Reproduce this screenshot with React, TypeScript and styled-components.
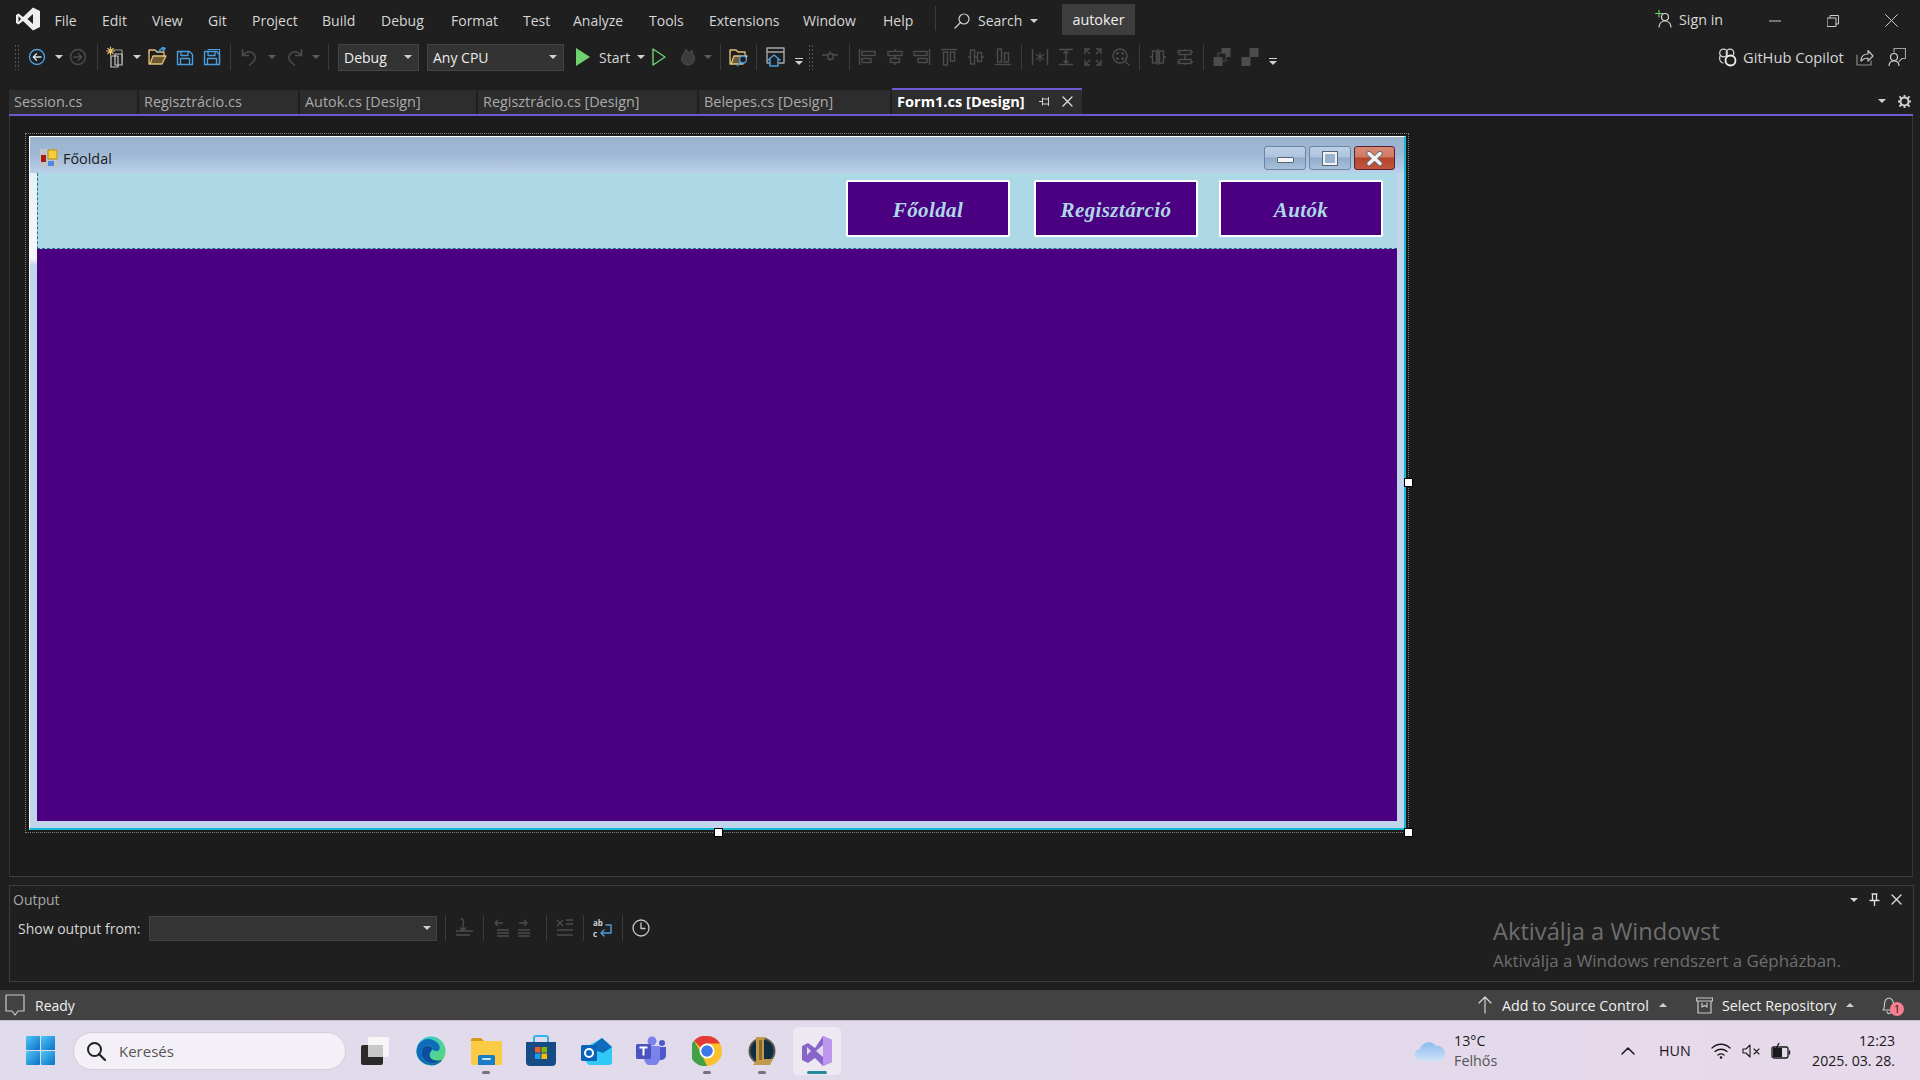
import React from "react";
import styled, {createGlobalStyle} from "styled-components";

const GlobalStyle = createGlobalStyle`
    html, body {
        margin: 0;
        padding: 0;
        background: #1f1f1f;
    }
    body {
        font-family: "Open Sans", "Noto Sans", "Liberation Sans", sans-serif;
        font-size: 14px;
        color: #d8d8d8;
    }
    svg {
        display: block;
        flex-shrink: 0;
    }
`;

const Page = styled.div`
    width: 1920px;
    height: 1080px;
    overflow: hidden;
    display: flex;
    flex-direction: column;
    background: #1f1f1f;
`;

const MenuBar = styled.div`
    height: 38px;
    display: flex;
    align-items: center;
    padding-left: 15px;
    padding-top: 3px;
    box-sizing: border-box;
    flex-shrink: 0;
`;

const LogoSlot = styled.div`
    width: 39.5px;
    flex-shrink: 0;
    margin-top: -3px;
`;

const MenuItem = styled.div<{ $w: number }>`
    width: ${(p) => p.$w}px;
    flex-shrink: 0;
    color: #d6d6d6;
    white-space: nowrap;
`;

const MenuSeparator = styled.div`
    width: 1px;
    height: 25px;
    background: #3c3c3c;
    margin: -4px 18px 0 20px;
    flex-shrink: 0;
`;

const SearchBox = styled.div`
    width: 108px;
    display: flex;
    align-items: center;
    gap: 8px;
    flex-shrink: 0;
`;

const ProjectName = styled.div`
    width: 73px;
    height: 31px;
    margin-top: -2px;
    display: flex;
    align-items: center;
    justify-content: center;
    background: #3d3d3d;
    color: #f0f0f0;
    font-size: 14.4px;
    flex-shrink: 0;
`;

const SignIn = styled.div`
    margin-left: 520px;
    display: flex;
    align-items: center;
    gap: 6px;
    width: 91px;
    flex-shrink: 0;
    font-size: 14.3px;
    white-space: nowrap;
    margin-top: -3px;
`;

const WindowButton = styled.div<{ $w: number }>`
    width: ${(p) => p.$w}px;
    display: flex;
    justify-content: center;
    flex-shrink: 0;
    margin-top: 0;
`;

const ToolBar = styled.div`
    height: 38px;
    box-sizing: border-box;
    display: flex;
    align-items: center;
    padding: 0 0 0 10px;
    flex-shrink: 0;
`;

const Slot = styled.div<{ $w: number }>`
    width: ${(p) => p.$w}px;
    height: 100%;
    display: flex;
    align-items: center;
    justify-content: center;
    flex-shrink: 0;
`;

const ToolSeparator = styled.div`
    width: 1px;
    height: 26px;
    background: #3a3a3a;
`;

const Caret = styled.span<{ $dim?: boolean; $up?: boolean }>`
    display: block;
    width: 0;
    height: 0;
    border-left: 4px solid transparent;
    border-right: 4px solid transparent;
    ${(p) => (p.$up ? "border-bottom" : "border-top")}: 4px solid ${(p) => (p.$dim ? "#5c5c5c" : "#d0d0d0")};
`;

const Grip = styled.div`
    width: 6px;
    height: 26px;
    flex-shrink: 0;
    background-image: radial-gradient(#555 0.8px, transparent 1px);
    background-size: 3px 4px;
`;

const Overflow = styled.div`
    width: 8px;
    margin-top: 9px;
    display: flex;
    flex-direction: column;
    align-items: center;
    gap: 2px;
    &::before {
        content: "";
        width: 8px;
        height: 1px;
        background: #d0d0d0;
    }
    &::after {
        content: "";
        border-left: 4px solid transparent;
        border-right: 4px solid transparent;
        border-top: 4px solid #d0d0d0;
    }
`;

const Combo = styled.div<{ $w: number }>`
    width: ${(p) => p.$w}px;
    height: 27px;
    box-sizing: border-box;
    display: flex;
    align-items: center;
    justify-content: space-between;
    padding: 0 6px 0 5px;
    background: #333333;
    border: 1px solid #434343;
    color: #ececec;
    flex-shrink: 0;
`;

const ToolText = styled.div<{ $w: number }>`
    width: ${(p) => p.$w}px;
    flex-shrink: 0;
    color: #d6d6d6;
    white-space: nowrap;
`;

const ToolRight = styled.div`
    margin-left: auto;
    display: flex;
    align-items: center;
    height: 100%;
    padding-right: 14px;
`;

const CopilotLabel = styled.div`
    margin: 0 13px 0 6px;
    width: 100px;
    color: #d6d6d6;
    white-space: nowrap;
    font-size: 14.7px;
`;

const TabStrip = styled.div`
    margin: 12px 7px 0 9px;
    height: 28px;
    box-sizing: border-box;
    display: flex;
    gap: 2px;
    align-items: stretch;
    border-bottom: 2px solid #6b5bd2;
    flex-shrink: 0;
`;

const Tab = styled.div<{ $w: number; $active?: boolean }>`
    width: ${(p) => p.$w}px;
    box-sizing: border-box;
    display: flex;
    align-items: center;
    padding: 0 0 2px 5px;
    background: #2d2d2d;
    border-top: 2px solid ${(p) => (p.$active ? "#6b5bd2" : "#1f1f1f")};
    color: ${(p) => (p.$active ? "#ffffff" : "#ababab")};
    font-weight: ${(p) => (p.$active ? 700 : 400)};
    white-space: nowrap;
    font-size: ${(p) => (p.$active ? 14.6 : 14.4)}px;
`;

const TabActions = styled.div`
    margin-left: auto;
    display: flex;
    align-items: center;
    gap: 12px;
    padding-right: 2px;
`;

const TabPinClose = styled.div`
    margin-left: auto;
    display: flex;
    align-items: center;
    gap: 12px;
    padding-right: 9px;
`;

const DesignerPane = styled.div`
    margin: 0 7px 0 9px;
    height: 761px;
    box-sizing: border-box;
    border-left: 1px solid #363636;
    border-right: 1px solid #363636;
    border-bottom: 1px solid #3f3f3f;
    background: #1b1b1b;
    padding: 17px 0 0 15px;
    flex-shrink: 0;
`;

const Selection = styled.div`
    position: relative;
    width: 1384px;
    height: 700px;
    box-sizing: border-box;
    border: 1px dotted #808080;
    padding: 2px 2px 2px 3px;
`;

const Handle = styled.div<{ $x: number; $y: number }>`
    position: absolute;
    left: ${(p) => p.$x}px;
    top: ${(p) => p.$y}px;
    width: 7px;
    height: 7px;
    background: #ffffff;
    box-shadow: 0 0 0 1px #000000;
`;

const FormWindow = styled.div`
    width: 1377px;
    height: 694px;
    box-sizing: border-box;
    display: flex;
    flex-direction: column;
    background: #c0d4ec;
    border-top: 1px solid #ffffff;
    border-left: 1px solid #ffffff;
    border-right: 2px solid #12b8d8;
    border-bottom: 2px solid #12b8d8;
`;

const TitleBar = styled.div`
    height: 36px;
    display: flex;
    align-items: flex-start;
    padding: 9px 9px 0 10px;
    box-sizing: border-box;
    background: linear-gradient(#9bb4d0 0%, #9eb7d3 45%, #b9d0e9 100%);
    flex-shrink: 0;
`;

const FormIcon = styled.svg`
    margin-top: 3px;
`;

const FormTitle = styled.div`
    margin: 3px 0 0 5px;
    font-size: 14.4px;
    color: #1a1a1a;
    line-height: 19px;
`;

const CaptionGroup = styled.div`
    margin-left: auto;
    display: flex;
    gap: 3px;
`;

const CaptionButton = styled.div<{ $close?: boolean }>`
    width: ${(p) => (p.$close ? 41 : 42)}px;
    height: 24px;
    box-sizing: border-box;
    border: 1px solid ${(p) => (p.$close ? "#5a2030" : "#6f84a0")};
    border-radius: 3px;
    display: flex;
    align-items: center;
    justify-content: center;
    background: ${(p) =>
        p.$close
            ? "linear-gradient(#d98a74 0%, #d07a64 45%, #b4452c 50%, #c0563c 100%)"
            : "linear-gradient(#bccfe6 0%, #aec4de 45%, #90acc9 50%, #a8c0da 100%)"};
`;

const MinGlyph = styled.div`
    width: 17px;
    height: 6px;
    box-sizing: border-box;
    background: #f4f4f4;
    border: 1px solid #55657c;
    border-radius: 1px;
    margin-top: 3px;
`;

const MaxGlyph = styled.div`
    width: 14px;
    height: 13px;
    box-sizing: border-box;
    background: #98b2d0;
    border: 2px solid #f2f2f2;
    outline: 1px solid #55657c;
`;

const FormBody = styled.div`
    flex: 1;
    display: flex;
    min-height: 0;
`;

const LeftEdge = styled.div`
    width: 7px;
    flex-shrink: 0;
    background: linear-gradient(#e8f1f9 0, #f4f8fc 85px, #c0d4ec 92px);
`;

const Client = styled.div`
    width: 1360px;
    margin-bottom: 7px;
    display: flex;
    flex-direction: column;
    background: #4b0082;
    flex-shrink: 0;
`;

const HeaderPanel = styled.div`
    height: 76px;
    box-sizing: border-box;
    display: flex;
    justify-content: flex-end;
    padding: 7px 14px 0 0;
    background: #add8e6;
    border-left: 1px dashed #2b6f86;
    border-bottom: 1px dashed #2b6f86;
`;

const NavButton = styled.div<{ $gap: number }>`
    width: 164px;
    height: 57px;
    box-sizing: border-box;
    margin-right: ${(p) => p.$gap}px;
    padding-top: 3px;
    display: flex;
    align-items: center;
    justify-content: center;
    background: #4b0082;
    border: 2px solid #ffffff;
    border-radius: 2px;
    color: #add8e6;
    font-family: "Liberation Serif", serif;
    font-style: italic;
    font-weight: 700;
    font-size: 21px;
    letter-spacing: 0.4px;
`;

const OutputPanel = styled.div`
    position: relative;
    margin: 8px 6px 0 9px;
    height: 97px;
    box-sizing: border-box;
    border: 1px solid #3c3c3c;
    flex-shrink: 0;
    padding: 0 0 0 3px;
`;

const OutputHead = styled.div`
    height: 27px;
    display: flex;
    align-items: center;
    color: #a8a8a8;
    font-size: 14px;
`;

const OutputActions = styled.div`
    margin-left: auto;
    display: flex;
    align-items: center;
    gap: 11px;
    padding-right: 11px;
`;

const OutputRow = styled.div`
    display: flex;
    align-items: center;
    height: 26px;
    margin-top: 2px;
    padding-left: 5px;
`;

const OutputLabel = styled.div`
    width: 131px;
    flex-shrink: 0;
    color: #d6d6d6;
    white-space: nowrap;
`;

const OutputCombo = styled.div`
    width: 288px;
    height: 25px;
    box-sizing: border-box;
    display: flex;
    align-items: center;
    justify-content: flex-end;
    padding-right: 5px;
    background: #343434;
    border: 1px solid #434343;
    flex-shrink: 0;
`;

const Watermark = styled.div`
    position: absolute;
    left: 1483px;
    top: 28px;
    color: #6e6e6e;
`;

const WatermarkTitle = styled.div`
    font-size: 23.7px;
    line-height: 34px;
`;

const WatermarkText = styled.div`
    font-size: 16.9px;
    line-height: 22px;
    margin-top: 2px;
`;

const StatusBar = styled.div`
    margin-top: 8px;
    height: 30px;
    display: flex;
    align-items: center;
    background: #424242;
    color: #f0f0f0;
    flex-shrink: 0;
`;

const StatusReady = styled.div`
    margin-left: 10px;
`;

const StatusRight = styled.div`
    margin-left: auto;
    display: flex;
    align-items: center;
    height: 100%;
    font-size: 14.3px;
`;

const StatusText = styled.div<{ $w: number }>`
    width: ${(p) => p.$w}px;
    white-space: nowrap;
    flex-shrink: 0;
`;

const Taskbar = styled.div`
    height: 60px;
    display: flex;
    align-items: center;
    box-sizing: border-box;
    border-top: 1px solid #c4bccb;
    padding: 0 25px 0 26px;
    background: linear-gradient(90deg, #e0dbea 0%, #e1daeb 50%, #e7d9ea 100%);
    flex-shrink: 0;
    color: #1a1a1a;
`;

const SearchPill = styled.div`
    width: 273px;
    height: 38px;
    box-sizing: border-box;
    margin: 0 1.5px 0 18px;
    display: flex;
    align-items: center;
    gap: 13px;
    padding-left: 12px;
    background: #f3f1f7;
    border: 1px solid #d4cedb;
    border-radius: 19px;
    color: #555555;
    font-size: 15px;
    flex-shrink: 0;
`;

const TaskSlot = styled.div<{ $nudge?: number }>`
    position: relative;
    width: 55.25px;
    height: 48px;
    display: flex;
    align-items: center;
    justify-content: center;
    flex-shrink: 0;
    & > svg {
        margin-left: ${(p) => p.$nudge ?? 0}px;
    }
`;

const ActiveTile = styled.div`
    width: 48px;
    height: 48px;
    display: flex;
    align-items: center;
    justify-content: center;
    border-radius: 5px;
    background: rgba(255, 255, 255, 0.42);
`;

const TaskDot = styled.div<{ $active?: boolean }>`
    position: absolute;
    left: 50%;
    bottom: 1px;
    width: ${(p) => (p.$active ? 20 : 8)}px;
    height: 3px;
    margin-left: ${(p) => (p.$active ? -10 : -4)}px;
    border-radius: 2px;
    background: ${(p) => (p.$active ? "#268a9c" : "#76727c")};
`;

const Weather = styled.div`
    margin-left: auto;
    width: 198px;
    display: flex;
    align-items: center;
    gap: 9px;
    flex-shrink: 0;
`;

const WeatherText = styled.div`
    font-size: 14.3px;
    line-height: 20px;
`;

const WeatherSub = styled.div`
    color: #555555;
`;

const Lang = styled.div`
    width: 47px;
    padding-left: 16px;
    font-size: 14.3px;
    flex-shrink: 0;
`;

const Clock = styled.div`
    width: 99px;
    text-align: right;
    font-size: 14.1px;
    line-height: 20px;
    flex-shrink: 0;
    white-space: nowrap;
`;

const Bell = styled.div`
    position: relative;
    width: 20px;
    display: flex;
    justify-content: center;
`;

const Badge = styled.div`
    position: absolute;
    left: 11px;
    top: 6px;
    width: 14px;
    height: 14px;
    border-radius: 50%;
    background: #f87e92;
    color: #1a1a1a;
    font-size: 11px;
    line-height: 14px;
    text-align: center;
`;

const DIM = "#4c4c4c";
const BLUE = "#4a9ee0";

function Ico({size = 18, w, h, children}: { size?: number; w?: number; h?: number; children: React.ReactNode }) {
    return (
        <svg width={w ?? size} height={h ?? size} viewBox={`0 0 ${w ?? size} ${h ?? size}`} fill="none" strokeLinecap="round" strokeLinejoin="round">
            {children}
        </svg>
    );
}

function Arrow({color, back}: { color: string; back?: boolean }) {
    return (
        <Ico size={18}>
            <circle cx="9" cy="9" r="7.5" stroke={color} strokeWidth="1.4"/>
            {back
                ? <path d="M13 9H5.5M8.5 5.8 5.3 9l3.2 3.2" stroke={color === BLUE ? "#cfe6f8" : color} strokeWidth="1.3"/>
                : <path d="M5 9h7.5M9.5 5.8 12.7 9l-3.2 3.2" stroke={color} strokeWidth="1.3"/>}
        </Ico>
    );
}

function SaveIcon({all}: { all?: boolean }) {
    return (
        <Ico size={18}>
            {all && <path d="M5 1.5h11.5v13" stroke={BLUE} strokeWidth="1.2"/>}
            <path d="M1.5 3.5h12l3 3v10h-15z" stroke={BLUE} strokeWidth="1.4"/>
            <path d="M5 3.5v4h7v-4M4.5 16.5v-6h9v6" stroke={BLUE} strokeWidth="1.3"/>
        </Ico>
    );
}

function FolderIcon({search}: { search?: boolean }) {
    return (
        <Ico size={20}>
            <path d="M1 5V17h13l4-8H5L2 17" fill="#6b5a32" stroke="#e3c27c" strokeWidth="1.3"/>
            <path d="M1 5V3h6l2 2h7v4" stroke="#e3c27c" strokeWidth="1.3"/>
            {search
                ? <><circle cx="14" cy="12.5" r="3.5" fill="#1f1f1f" stroke={BLUE} strokeWidth="1.4"/><path d="M11.5 15 8.5 18.5" stroke={BLUE} strokeWidth="1.6"/></>
                : <path d="M11 5c.5-2.5 2.5-3.5 5-3.5M14 0l3 1.500-2 2.500" stroke={BLUE} strokeWidth="1.5"/>}
        </Ico>
    );
}

function NewProjectIcon() {
    return (
        <Ico size={22}>
            <path d="M7 4h9v12" stroke="#9a9a9a" strokeWidth="1.2"/>
            <rect x="9" y="8" width="7" height="11" fill="#1f1f1f" stroke="#c8c8c8" strokeWidth="1.2"/>
            <rect x="5" y="10" width="7" height="11" stroke="#c8c8c8" strokeWidth="1.2"/>
            <path d="M4.5 1v8M.5 5h8M1.8 2.3l5.4 5.4M7.2 2.3 1.8 7.7" stroke="#e8c36a" strokeWidth="1.2"/>
        </Ico>
    );
}

function UndoIcon({redo}: { redo?: boolean }) {
    return (
        <Ico size={18}>
            <g transform={redo ? "translate(18 0) scale(-1 1)" : undefined}>
                <path d="M1.5 1.5v6h6M1.8 7.2C5 3.5 8 3 11 4.5c3.5 2 4 6 2 8.5-1.2 1.5-2.5 2.5-4.5 4" stroke={DIM} strokeWidth="1.5"/>
            </g>
        </Ico>
    );
}

function FlameIcon() {
    return (
        <Ico size={18}>
            <path d="M9 17c-4 0-6.500-2.500-6.500-6C2.500 7 6 5.500 7 1c1 2 2 2.500 2.500 4C11.500 3.500 12 3 13 2c-.2 3 2.500 5 2.500 9 0 3.500-2.500 6-6.500 6z" fill="#3d3d3d" stroke={DIM}/>
        </Ico>
    );
}

function DesignerIcon() {
    return (
        <Ico size={20}>
            <path d="M4 16H1V1h17v15h-5M1 5h17" stroke="#a8a8a8" strokeWidth="1.4"/>
            <path d="M2 13l6-5 6 5M4 12v7h8v-7" fill="#1f1f1f" stroke={BLUE} strokeWidth="1.5"/>
        </Ico>
    );
}

function LayoutIcon({kind}: { kind: string }) {
    const paths: Record<string, React.ReactNode> = {
        tabH: <><path d="M1 7h16M9 3v10"/><rect x="7" y="6" width="5" height="5" fill="#1f1f1f"/></>,
        left: <><path d="M1.500 1v16"/><rect x="4" y="3.500" width="13" height="4"/><rect x="4" y="10.500" width="9" height="4"/></>,
        hcenter: <><path d="M9 1v16"/><rect x="2" y="3.500" width="14" height="4" fill="#1f1f1f"/><rect x="4.500" y="10.500" width="9" height="4" fill="#1f1f1f"/></>,
        right: <><path d="M16.500 1v16"/><rect x="1" y="3.500" width="13" height="4"/><rect x="5" y="10.500" width="9" height="4"/></>,
        top: <><path d="M1 1.500h16"/><rect x="3.500" y="4" width="4" height="13"/><rect x="10.500" y="4" width="4" height="9"/></>,
        middle: <><path d="M1 9h16"/><rect x="3.500" y="2" width="4" height="14" fill="#1f1f1f"/><rect x="10.500" y="4.500" width="4" height="9" fill="#1f1f1f"/></>,
        bottom: <><path d="M1 16.500h16"/><rect x="3.500" y="1" width="4" height="13"/><rect x="10.500" y="5" width="4" height="9"/></>,
        star: <><path d="M1.500 1v16M16.500 1v16M9 4.500v9M5 6.500l8 5M13 6.500l-8 5"/></>,
        vspace: <><path d="M2 1.500h14M2 16.500h14M9 3v12M6.500 5.500 9 3l2.500 2.500M6.500 12.500 9 15l2.500-2.500"/></>,
        fit: <><path d="M1 6V1h5M12 1h5v5M17 12v5h-5M6 17H1v-5M2 2l4 4M16 2l-4 4M16 16l-4-4M2 16l4-4"/></>,
        zoom: <><circle cx="8" cy="8" r="7"/><path d="M13 13l4.500 4.500M5 7V5h2M9 5h2v2M11 9v2H9M7 11H5V9"/></>,
        pairV: <><path d="M9 1v16M1 9h3M14 9h3"/><rect x="3.500" y="3" width="4" height="12" fill="#1f1f1f"/><rect x="10.500" y="3" width="4" height="12" fill="#1f1f1f"/></>,
        pairH: <><path d="M9 1v16M1 4h16M1 14h16"/><rect x="3" y="2.500" width="12" height="4" fill="#1f1f1f"/><rect x="3" y="11.500" width="12" height="4" fill="#1f1f1f"/></>,
    };
    return (
        <svg width="18" height="18" viewBox="0 0 18 18" fill="none" stroke={DIM} strokeWidth="1.4">
            {paths[kind]}
        </svg>
    );
}

function LayerIcon({front}: { front?: boolean }) {
    return (
        <svg width="18" height="18" viewBox="0 0 18 18" fill="none">
            <rect x="9" y="0.500" width="8" height="8" fill="#4c4c4c" stroke={DIM}/>
            <rect x="5" y="5" width="8" height="8" fill={front ? "#1f1f1f" : "none"} stroke={front ? DIM : "none"}/>
            <rect x="1" y="9.500" width="8" height="8" fill="#4c4c4c" stroke={DIM}/>
        </svg>
    );
}

function VsLogo() {
    return (
        <Ico w={26} h={26}>
            <path d="M18 1.500 25 5v16l-7 3.500L8 15l-4.500 3.500L1 17V9l2.500-1.500L8 11zM18 8l-5.500 5 5.500 5z" fill="#eeeeee" fillRule="evenodd"/>
            <path d="M3.500 10v6l2.500-3z" fill="#1f1f1f"/>
        </Ico>
    );
}

function WinLogo() {
    return (
        <svg width="29" height="29" viewBox="0 0 29 29">
            <defs>
                <linearGradient id="wg" x1="0" y1="0" x2="1" y2="1">
                    <stop offset="0" stopColor="#52c7f5"/>
                    <stop offset="1" stopColor="#0a70c8"/>
                </linearGradient>
            </defs>
            <rect x="0" y="0" width="14" height="14" rx="1" fill="url(#wg)"/>
            <rect x="15" y="0" width="14" height="14" rx="1" fill="url(#wg)"/>
            <rect x="0" y="15" width="14" height="14" rx="1" fill="url(#wg)"/>
            <rect x="15" y="15" width="14" height="14" rx="1" fill="url(#wg)"/>
        </svg>
    );
}

function TaskViewIcon() {
    return (
        <svg width="30" height="30" viewBox="0 0 30 30">
            <rect x="1" y="9" width="22" height="20" rx="2" fill="#2a2a2a"/>
            <rect x="8" y="1" width="21" height="20" rx="2" fill="#f8f8f8" opacity="0.9"/>
            <rect x="8" y="9" width="15" height="12" fill="#c8c8c8"/>
        </svg>
    );
}

function EdgeIcon() {
    return (
        <svg width="30" height="30" viewBox="0 0 30 30">
            <defs>
                <linearGradient id="eg" x1="0" y1="0" x2="1" y2="1">
                    <stop offset="0" stopColor="#2ec8e0"/>
                    <stop offset="1" stopColor="#62d86a"/>
                </linearGradient>
            </defs>
            <circle cx="15" cy="15" r="14.500" fill="url(#eg)"/>
            <path d="M.5 15C1 6 8 3 12 3c8 0 14 7 11 11-2 2-6 1-6-1 0-4-7-5-10-1-3 5-1 13 7 15 4 1 8 0 12-3-2 4-8 6-12 5C6 28 0 22 .5 15z" fill="#0f6cbd"/>
            <path d="M7 12c-3 5-1 13 7 15 3 1 8 0 12-3-4 1-10 1-12-3-1-3 0-5 3-8 0-3-7-5-10-1z" fill="#0d4f9e"/>
        </svg>
    );
}

function ExplorerIcon() {
    return (
        <svg width="31" height="28" viewBox="0 0 31 28">
            <path d="M0 3a2 2 0 0 1 2-2h8l3 3H0z" fill="#d69a14"/>
            <rect x="0" y="4" width="31" height="24" rx="1.500" fill="#fbcb45"/>
            <path d="M7 28v-8a2 2 0 0 1 2-2h13a2 2 0 0 1 2 2v8z" fill="#1a7cc6"/>
            <rect x="11" y="21" width="9" height="2" rx="1" fill="#bfe2f7"/>
        </svg>
    );
}

function StoreIcon() {
    return (
        <svg width="30" height="31" viewBox="0 0 30 31">
            <path d="M8 8V3a2 2 0 0 1 2-2h10a2 2 0 0 1 2 2v5" fill="none" stroke="#2fb6ee" strokeWidth="2"/>
            <path d="M0 7h30v20a4 4 0 0 1-4 4H4a4 4 0 0 1-4-4z" fill="#174b86"/>
            <rect x="9" y="12" width="5.500" height="5.500" fill="#f05a28"/>
            <rect x="15.500" y="12" width="5.500" height="5.500" fill="#7fba00"/>
            <rect x="9" y="18.500" width="5.500" height="5.500" fill="#1a9fe8"/>
            <rect x="15.500" y="18.500" width="5.500" height="5.500" fill="#ffb900"/>
        </svg>
    );
}

function OutlookIcon() {
    return (
        <svg width="31" height="28" viewBox="0 0 31 28">
            <path d="M5 10 21 1l10 9v15a3 3 0 0 1-3 3H8l-3-3z" fill="#30c8f4"/>
            <path d="M8 11 21 1l10 9-9 6z" fill="#0f6cbd"/>
            <rect x="0" y="8" width="16" height="16" rx="1.500" fill="#0a63b8"/>
            <circle cx="8" cy="16" r="4" fill="none" stroke="#ffffff" strokeWidth="2"/>
        </svg>
    );
}

function TeamsIcon() {
    return (
        <svg width="30" height="29" viewBox="0 0 30 29">
            <circle cx="16" cy="5" r="4.500" fill="#7b83eb"/>
            <circle cx="26" cy="7" r="3" fill="#5059c9"/>
            <path d="M22 11h8v9a5 5 0 0 1-8 3z" fill="#5059c9"/>
            <path d="M8 10h16v12a7 7 0 0 1-16 0z" fill="#7b83eb"/>
            <rect x="0" y="8" width="15" height="15" rx="1.500" fill="#4b53bc"/>
            <path d="M3.500 11.500h8M7.500 11.500v8" stroke="#ffffff" strokeWidth="2"/>
        </svg>
    );
}

function ChromeIcon() {
    return (
        <svg width="30" height="30" viewBox="0 0 30 30">
            <circle cx="15" cy="15" r="15" fill="#fbc02d"/>
            <path d="M15 0a15 15 0 0 1 13 7.500H15a7.500 7.500 0 0 0-6.500 3.800L2 4.800A15 15 0 0 1 15 0z" fill="#e53935"/>
            <path d="M2 4.800l6.500 11.200L15 30A15 15 0 0 1 2 4.800z" fill="#43a047"/>
            <circle cx="15" cy="15" r="7.500" fill="#ffffff"/>
            <circle cx="15" cy="15" r="5.800" fill="#3f78e8"/>
        </svg>
    );
}

function LolIcon() {
    return (
        <svg width="28" height="30" viewBox="0 0 28 30">
            <circle cx="14" cy="15" r="12.500" fill="#0d2f3f" stroke="#5c5648" strokeWidth="2"/>
            <path d="M8 1h10l-2 3v19h9l-3 6H5l3-4V5z" fill="#c2994c"/>
            <path d="M11 4h3v20h-3z" fill="#8a6a2c"/>
        </svg>
    );
}

function VsColorIcon() {
    return (
        <svg width="30" height="30" viewBox="0 0 30 30">
            <path d="M21 0l9 4v22l-9 4-8-8-7 5-6-3V10l6-3 7 5z" fill="#8a65c9"/>
            <path d="M21 0l9 4v22l-9 4z" fill="#bd97ed"/>
            <path d="M21 9l-7 6 7 6z" fill="#e0dcee"/>
            <path d="M5 11v8l4-4z" fill="#e0dcee"/>
        </svg>
    );
}

function DimOutputIcon({kind}: { kind: string }) {
    return (
        <svg width="18" height="20" viewBox="0 0 18 20" fill="none" stroke={DIM} strokeWidth="1.300">
            {kind === "wrap" && <path d="M6 1c3 0 3 3 2 5v6M5 9.500 8 12.500l3-3M1 13h17M1 17h14"/>}
            {kind === "left" && <path d="M2 5h8M5 2 2 5l3 3M4 12h12M4 15h12M4 18h12"/>}
            {kind === "right" && <path d="M2 5h8M7 2l3 3-3 3M1 12h12M1 15h12M1 18h12"/>}
            {kind === "clear" && <path d="M1 2l6 6M7 2 1 8M10 2h7M10 6h7M1 12h16M1 17h16"/>}
        </svg>
    );
}

const navItems = [
    {label: "Főoldal", gap: 24},
    {label: "Regisztárció", gap: 21},
    {label: "Autók", gap: 0},
];

const menuItems: [string, number][] = [
    ["File", 47.5], ["Edit", 50], ["View", 56], ["Git", 44], ["Project", 70], ["Build", 59], ["Debug", 70],
    ["Format", 72], ["Test", 50], ["Analyze", 76], ["Tools", 60], ["Extensions", 94], ["Window", 80], ["Help", 32],
];

const tabs: [string, number][] = [
    ["Session.cs", 128], ["Regisztrácio.cs", 159], ["Autok.cs [Design]", 176], ["Regisztrácio.cs [Design]", 219], ["Belepes.cs [Design]", 191],
];

export default function App() {
    return (
        <>
            <GlobalStyle/>
            <Page>
                <MenuBar>
                    <LogoSlot><VsLogo/></LogoSlot>
                    {menuItems.map(([label, w]) => <MenuItem key={label} $w={w}>{label}</MenuItem>)}
                    <MenuSeparator/>
                    <SearchBox>
                        <Ico size={16}>
                            <circle cx="10" cy="6" r="5" stroke="#d0d0d0" strokeWidth="1.200"/>
                            <path d="M6.500 9.500 1 15" stroke="#d0d0d0" strokeWidth="1.300"/>
                        </Ico>
                        Search
                        <Caret/>
                    </SearchBox>
                    <ProjectName>autoker</ProjectName>
                    <SignIn>
                        <Ico size={18}>
                            <path d="M4 0v7M.5 3.500h7" stroke="#6fd16f" strokeWidth="1.100"/>
                            <circle cx="10" cy="7" r="3.500" stroke="#d6d6d6" strokeWidth="1.200"/>
                            <path d="M4 17c.5-4 3-6 6-6s5.500 2 6 6" stroke="#d6d6d6" strokeWidth="1.200"/>
                        </Ico>
                        Sign in
                    </SignIn>
                    <WindowButton $w={58}><Ico w={12} h={2}><path d="M0 1h12" stroke="#c8c8c8"/></Ico></WindowButton>
                    <WindowButton $w={58}>
                        <Ico size={12}>
                            <path d="M3 3V.5h8.500V9H9" stroke="#c8c8c8"/>
                            <rect x="0.500" y="3" width="8.500" height="8.500" stroke="#c8c8c8"/>
                        </Ico>
                    </WindowButton>
                    <WindowButton $w={58}><Ico size={13}><path d="M.5.500l12 12M12.500.500l-12 12" stroke="#c8c8c8"/></Ico></WindowButton>
                </MenuBar>
                <ToolBar>
                    <Slot $w={14}><Grip/></Slot>
                    <Slot $w={26}><Arrow color={BLUE} back/></Slot>
                    <Slot $w={18}><Caret/></Slot>
                    <Slot $w={20}><Arrow color={DIM}/></Slot>
                    <Slot $w={18}><ToolSeparator/></Slot>
                    <Slot $w={22}><NewProjectIcon/></Slot>
                    <Slot $w={18}><Caret/></Slot>
                    <Slot $w={24}><FolderIcon/></Slot>
                    <Slot $w={30}><SaveIcon/></Slot>
                    <Slot $w={24}><SaveIcon all/></Slot>
                    <Slot $w={12}><ToolSeparator/></Slot>
                    <Slot $w={28}><UndoIcon/></Slot>
                    <Slot $w={16}><Caret $dim/></Slot>
                    <Slot $w={28}><UndoIcon redo/></Slot>
                    <Slot $w={16}><Caret $dim/></Slot>
                    <Slot $w={8}><ToolSeparator/></Slot>
                    <Slot $w={6}/>
                    <Combo $w={81}>Debug<Caret/></Combo>
                    <Slot $w={8}/>
                    <Combo $w={137}>Any CPU<Caret/></Combo>
                    <Slot $w={12}/>
                    <Slot $w={14}>
                        <Ico w={14} h={18}><path d="M0 0l14 9-14 9z" fill="#6fd16f"/></Ico>
                    </Slot>
                    <Slot $w={9}/>
                    <ToolText $w={36}>Start</ToolText>
                    <Slot $w={12}><Caret/></Slot>
                    <Slot $w={24}>
                        <Ico w={14} h={18}><path d="M1 1l12 8-12 8z" stroke="#6fd16f" strokeWidth="1.400"/></Ico>
                    </Slot>
                    <Slot $w={34}><FlameIcon/></Slot>
                    <Slot $w={6}><Caret $dim/></Slot>
                    <Slot $w={18}><ToolSeparator/></Slot>
                    <Slot $w={20}><FolderIcon search/></Slot>
                    <Slot $w={14}><ToolSeparator/></Slot>
                    <Slot $w={26}><DesignerIcon/></Slot>
                    <Slot $w={20}><Overflow/></Slot>
                    <Slot $w={4}><Grip/></Slot>
                    <Slot $w={34}><LayoutIcon kind="tabH"/></Slot>
                    <Slot $w={4}><ToolSeparator/></Slot>
                    <Slot $w={32}><LayoutIcon kind="left"/></Slot>
                    <Slot $w={23}><LayoutIcon kind="hcenter"/></Slot>
                    <Slot $w={32}><LayoutIcon kind="right"/></Slot>
                    <Slot $w={22}><LayoutIcon kind="top"/></Slot>
                    <Slot $w={32}><LayoutIcon kind="middle"/></Slot>
                    <Slot $w={22}><LayoutIcon kind="bottom"/></Slot>
                    <Slot $w={14}><ToolSeparator/></Slot>
                    <Slot $w={24}><LayoutIcon kind="star"/></Slot>
                    <Slot $w={28}><LayoutIcon kind="vspace"/></Slot>
                    <Slot $w={26}><LayoutIcon kind="fit"/></Slot>
                    <Slot $w={30}><LayoutIcon kind="zoom"/></Slot>
                    <Slot $w={6}><ToolSeparator/></Slot>
                    <Slot $w={32}><LayoutIcon kind="pairV"/></Slot>
                    <Slot $w={22}><LayoutIcon kind="pairH"/></Slot>
                    <Slot $w={14}><ToolSeparator/></Slot>
                    <Slot $w={24}><LayerIcon front/></Slot>
                    <Slot $w={32}><LayerIcon/></Slot>
                    <Slot $w={14}><Overflow/></Slot>
                    <ToolRight>
                        <Ico size={19}>
                            <circle cx="5.500" cy="5" r="3.800" stroke="#d6d6d6" strokeWidth="1.300"/>
                            <circle cx="12" cy="5" r="3.800" stroke="#d6d6d6" strokeWidth="1.300"/>
                            <path d="M2 8c-1 3 0 6 3 7" stroke="#d6d6d6" strokeWidth="1.300"/>
                            <circle cx="12.500" cy="12.500" r="5" fill="#1f1f1f" stroke="#f0f0f0" strokeWidth="1.800"/>
                        </Ico>
                        <CopilotLabel>GitHub Copilot</CopilotLabel>
                        <Ico size={18}>
                            <path d="M1 7v10h14v-4" stroke="#8c8c8c" strokeWidth="1.200"/>
                            <path d="M5 13c0-5 3-7 7-7V2.500l5 5.500-5 5V10c-3 0-5 1-7 3z" stroke="#c0c0c0" strokeWidth="1.200"/>
                        </Ico>
                        <Slot $w={14}/>
                        <Ico size={18}>
                            <path d="M6 4V.5h11.500v10H14l-3 3" stroke="#a0a0a0" strokeWidth="1.200"/>
                            <circle cx="6" cy="9" r="3.500" stroke="#d0d0d0" strokeWidth="1.200"/>
                            <path d="M1 17.500c.3-3 2.300-4.500 5-4.500s4.700 1.500 5 4.500" stroke="#d0d0d0" strokeWidth="1.200"/>
                        </Ico>
                    </ToolRight>
                </ToolBar>
                <TabStrip>
                    {tabs.map(([label, w]) => <Tab key={label} $w={w}>{label}</Tab>)}
                    <Tab $w={190} $active>
                        Form1.cs [Design]
                        <TabPinClose>
                            <Ico w={11} h={11}>
                                <path d="M0 5.500h3M3.500 2v7M3.500 3h6v5h-6M9.500 1.500v8" stroke="#d0d0d0"/>
                            </Ico>
                            <Ico w={11} h={11}><path d="M1 1l9 9M10 1l-9 9" stroke="#e0e0e0" strokeWidth="1.300"/></Ico>
                        </TabPinClose>
                    </Tab>
                    <TabActions>
                        <Caret/>
                        <Ico size={13}>
                            <circle cx="6.500" cy="6.500" r="4" stroke="#d0d0d0" strokeWidth="2"/>
                            <path d="M6.500 0v2M6.500 11v2M0 6.500h2M11 6.500h2M2 2l1.300 1.300M9.700 9.700 11 11M11 2 9.700 3.300M3.300 9.700 2 11" stroke="#d0d0d0" strokeWidth="1.800"/>
                        </Ico>
                    </TabActions>
                </TabStrip>
                <DesignerPane>
                    <Selection>
                        <FormWindow>
                            <TitleBar>
                                <FormIcon width="18" height="18" viewBox="0 0 18 18">
                                    <rect width="18" height="18" fill="#c0c4c8"/>
                                    <rect x="1" y="6" width="5" height="7" fill="#a81c10"/>
                                    <rect x="8" y="1" width="9" height="9" fill="#f6cf3c" stroke="#b08a10"/>
                                    <rect x="8" y="12" width="6" height="5" fill="#4c88e0"/>
                                </FormIcon>
                                <FormTitle>Főoldal</FormTitle>
                                <CaptionGroup>
                                    <CaptionButton><MinGlyph/></CaptionButton>
                                    <CaptionButton><MaxGlyph/></CaptionButton>
                                    <CaptionButton $close>
                                        <Ico w={17} h={15}>
                                            <path d="M3 2.500l11 10M14 2.500l-11 10" stroke="#55657c" strokeWidth="5"/>
                                            <path d="M3 2.500l11 10M14 2.500l-11 10" stroke="#f2f2f2" strokeWidth="3.500"/>
                                        </Ico>
                                    </CaptionButton>
                                </CaptionGroup>
                            </TitleBar>
                            <FormBody>
                                <LeftEdge/>
                                <Client>
                                    <HeaderPanel>
                                        {navItems.map((item) => (
                                            <NavButton key={item.label} $gap={item.gap}>{item.label}</NavButton>
                                        ))}
                                    </HeaderPanel>
                                </Client>
                            </FormBody>
                        </FormWindow>
                        <Handle $x={1379} $y={345}/>
                        <Handle $x={689} $y={695}/>
                        <Handle $x={1379} $y={695}/>
                    </Selection>
                </DesignerPane>
                <OutputPanel>
                    <OutputHead>
                        Output
                        <OutputActions>
                            <Caret/>
                            <Ico w={11} h={13}><path d="M3 1h5M3.500 1v6M7.500 1v6M1 7.500h9M5.500 8v5" stroke="#e0e0e0" strokeWidth="1.300"/></Ico>
                            <Ico w={11} h={11}><path d="M1 1l9 9M10 1l-9 9" stroke="#e0e0e0" strokeWidth="1.300"/></Ico>
                        </OutputActions>
                    </OutputHead>
                    <OutputRow>
                        <OutputLabel>Show output from:</OutputLabel>
                        <OutputCombo><Caret/></OutputCombo>
                        <Slot $w={17}><ToolSeparator/></Slot>
                        <Slot $w={20}><DimOutputIcon kind="wrap"/></Slot>
                        <Slot $w={18}><ToolSeparator/></Slot>
                        <Slot $w={20}><DimOutputIcon kind="left"/></Slot>
                        <Slot $w={28}><DimOutputIcon kind="right"/></Slot>
                        <Slot $w={13}><ToolSeparator/></Slot>
                        <Slot $w={24}><DimOutputIcon kind="clear"/></Slot>
                        <Slot $w={13}><ToolSeparator/></Slot>
                        <Slot $w={26}>
                            <Ico w={20} h={24}>
                                <text x="0" y="10" fontSize="8" fontWeight="700" fill="#d0d0d0" fontFamily="Open Sans">ab</text>
                                <text x="0" y="21" fontSize="8" fontWeight="700" fill="#d0d0d0" fontFamily="Open Sans">c</text>
                                <path d="M13 9h5v8H8M11 14l-3 3 3 3" stroke={BLUE} strokeWidth="1.400"/>
                            </Ico>
                        </Slot>
                        <Slot $w={12}><ToolSeparator/></Slot>
                        <Slot $w={26}>
                            <Ico size={18}>
                                <circle cx="9" cy="9" r="8" stroke="#c8c8c8" strokeWidth="1.300"/>
                                <path d="M9 4v5.500h4" stroke="#c8c8c8" strokeWidth="1.300"/>
                            </Ico>
                        </Slot>
                    </OutputRow>
                    <Watermark>
                        <WatermarkTitle>Aktiválja a Windowst</WatermarkTitle>
                        <WatermarkText>Aktiválja a Windows rendszert a Gépházban.</WatermarkText>
                    </Watermark>
                </OutputPanel>
                <StatusBar>
                    <Slot $w={5}/>
                    <Ico w={20} h={22}>
                        <path d="M1 1h18v16h-6l-3 4-3-4H1z" stroke="#c8c8c8" strokeWidth="1.200"/>
                    </Ico>
                    <StatusReady>Ready</StatusReady>
                    <StatusRight>
                        <Slot $w={22}>
                            <Ico w={14} h={18}><path d="M7 17V1M1 7l6-6 6 6" stroke="#e0e0e0" strokeWidth="1.100"/></Ico>
                        </Slot>
                        <Slot $w={6}/>
                        <StatusText $w={151}>Add to Source Control</StatusText>
                        <Slot $w={20}><Caret $up/></Slot>
                        <Slot $w={23}/>
                        <Ico w={17} h={17}>
                            <path d="M.5 1h16v3H.5zM2 4v12h13V4M6 6v4l2.500-1.500L11 10V6" stroke="#c8c8c8" strokeWidth="1.200"/>
                        </Ico>
                        <Slot $w={9}/>
                        <StatusText $w={119}>Select Repository</StatusText>
                        <Slot $w={18}><Caret $up/></Slot>
                        <Slot $w={20}/>
                        <Bell>
                            <Ico w={16} h={18}>
                                <path d="M2 14c1-1 1.500-2 1.500-6 0-3 2-6 4.500-6s4.500 3 4.500 6c0 4 .5 5 1.500 6zM6 15.500a2 2 0 0 0 4 0" stroke="#c8c8c8" strokeWidth="1.100"/>
                            </Ico>
                            <Badge>1</Badge>
                        </Bell>
                        <Slot $w={21}/>
                    </StatusRight>
                </StatusBar>
                <Taskbar>
                    <WinLogo/>
                    <SearchPill>
                        <Ico size={20}>
                            <circle cx="8.500" cy="8.500" r="6.500" stroke="#222222" strokeWidth="2"/>
                            <path d="M13 13l6 6" stroke="#222222" strokeWidth="2.200"/>
                        </Ico>
                        Keresés
                    </SearchPill>
                    <TaskSlot><TaskViewIcon/></TaskSlot>
                    <TaskSlot $nudge={2}><EdgeIcon/></TaskSlot>
                    <TaskSlot $nudge={2}><ExplorerIcon/><TaskDot/></TaskSlot>
                    <TaskSlot $nudge={1}><StoreIcon/></TaskSlot>
                    <TaskSlot><OutlookIcon/></TaskSlot>
                    <TaskSlot><TeamsIcon/></TaskSlot>
                    <TaskSlot><ChromeIcon/><TaskDot/></TaskSlot>
                    <TaskSlot><LolIcon/><TaskDot/></TaskSlot>
                    <TaskSlot><ActiveTile><VsColorIcon/></ActiveTile><TaskDot $active/></TaskSlot>
                    <Weather>
                        <svg width="30" height="20" viewBox="0 0 30 20">
                            <defs>
                                <linearGradient id="cg" x1="0" y1="0" x2="0" y2="1">
                                    <stop offset="0" stopColor="#8dbcee"/>
                                    <stop offset="1" stopColor="#cfe2f8"/>
                                </linearGradient>
                            </defs>
                            <path d="M6 20a6 6 0 0 1-1-12 9 9 0 0 1 16-3 7.500 7.500 0 0 1 3 15z" fill="url(#cg)"/>
                        </svg>
                        <WeatherText>
                            13°C
                            <WeatherSub>Felhős</WeatherSub>
                        </WeatherText>
                    </Weather>
                    <Slot $w={30}>
                        <Ico w={14} h={8}><path d="M1 7l6-6 6 6" stroke="#1a1a1a" strokeWidth="1.500"/></Ico>
                    </Slot>
                    <Lang>HUN</Lang>
                    <Slot $w={30}>
                        <Ico w={20} h={16}>
                            <path d="M1 5c5-5 13-5 18 0M4 8.500c3.500-3 8.500-3 12 0M7 12c2-1.500 4-1.500 6 0" stroke="#1a1a1a" strokeWidth="1.300"/>
                            <circle cx="10" cy="14.500" r="1.300" fill="#1a1a1a"/>
                        </Ico>
                    </Slot>
                    <Slot $w={30}>
                        <Ico w={19} h={14}>
                            <path d="M1 5v4h3l4 4V1L4 5zM12 5l5 5M17 5l-5 5" stroke="#1a1a1a" strokeWidth="1.100"/>
                        </Ico>
                    </Slot>
                    <Slot $w={30}>
                        <Ico w={20} h={16}>
                            <rect x="1" y="4" width="16" height="11" rx="2" stroke="#1a1a1a" strokeWidth="1.300"/>
                            <rect x="2" y="5" width="9" height="9" fill="#1a1a1a"/>
                            <path d="M18.500 8v3M8 0 5 6h4l-3 5" stroke="#1a1a1a" strokeWidth="1.300"/>
                        </Ico>
                    </Slot>
                    <Clock>
                        12:23
                        <div>2025. 03. 28.</div>
                    </Clock>
                </Taskbar>
            </Page>
        </>
    );
}
